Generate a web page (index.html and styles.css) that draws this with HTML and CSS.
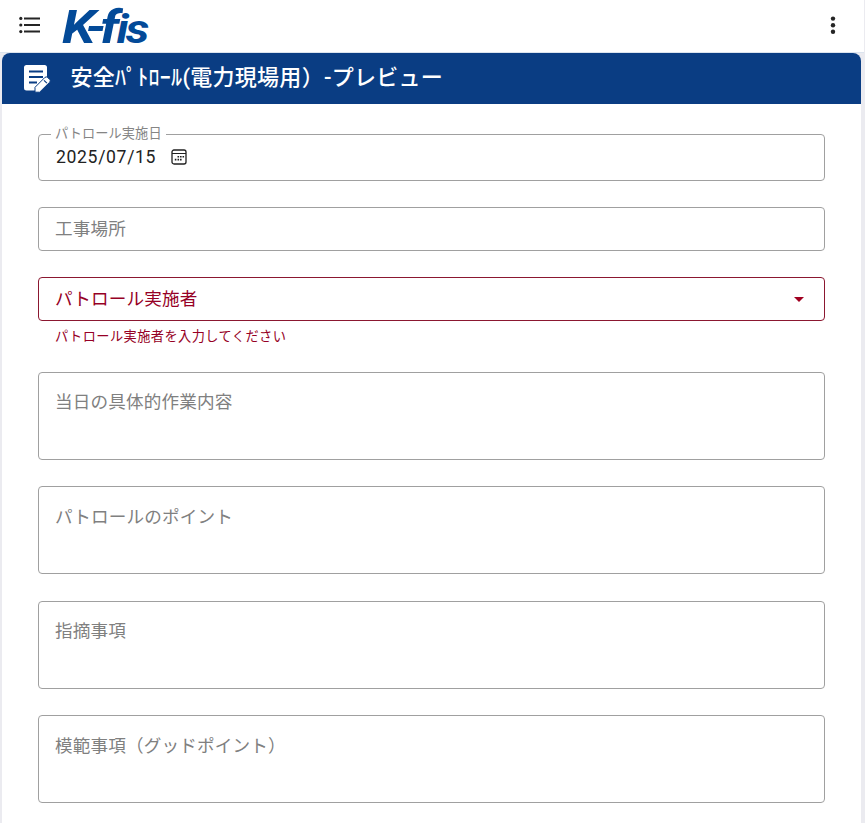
FILE: index.html
```html
<!DOCTYPE html>
<html lang="ja">
<head>
<meta charset="utf-8">
<title>K-fis</title>
<link rel="stylesheet" href="styles.css">
</head>
<body>
<header class="topbar">
  <svg class="menu" viewBox="0 0 22 18"><g fill="#252525"><circle cx="1.8" cy="2.4" r="1.6"/><circle cx="1.8" cy="9" r="1.6"/><circle cx="1.8" cy="15.6" r="1.6"/><path d="M5 1.4h16v2H5zM5 8h16v2H5zM5 14.6h16v2H5z"/></g></svg>
  <svg class="logo" viewBox="0 0 90 42"><text y="39" transform="scale(1.15 1)" x="0 20.5 33.2">K-f<tspan class="small" x="47.5 55.5">is</tspan></text></svg>
  <svg class="more" viewBox="0 0 6 20"><g fill="#252525"><circle cx="3" cy="3.6" r="2.2"/><circle cx="3" cy="10.2" r="2.2"/><circle cx="3" cy="16.8" r="2.2"/></g></svg>
</header>
<main class="sheet">
  <div class="title">
    <svg class="note" viewBox="0 0 28 28"><path fill="#fff" d="M4.5 0h18Q25 0 25 2.500V12L13 25.500H4.500Q2 25.500 2 23V2.500Q2 0 4.500 0z"/><path fill="none" stroke="#0a3d83" stroke-width="2" d="M7 6.500h14M7 12h14M7 17.500h8"/><path fill="#fff" stroke="#0a3d83" stroke-width="1" d="M13 22.300 22.800 12.500q1.500-1.300 2.900 0l2 2q1.300 1.300 0 2.700L17.600 27.200H13z"/><path stroke="#0a3d83" stroke-width="1.200" d="m22 15.300 2.900 2.900"/></svg>
    <h1>安全ﾊﾟﾄﾛｰﾙ(電力現場用）-プレビュー</h1>
  </div>
  <form class="fields">
    <fieldset class="date">
      <legend>パトロール実施日</legend>
      <span class="value">2025/07/15</span>
      <svg class="cal" viewBox="0 0 16 16"><rect x="1" y="1" width="14" height="14" rx="2" fill="none" stroke="#202020" stroke-width="1.300"/><path stroke="#202020" stroke-width="1.200" d="M1 4.500h14"/><path fill="#202020" d="M6.500 7h1.600v1.600H6.500zM9 7h1.600v1.600H9zM11.500 7h1.600v1.600h-1.600zM3.800 9.800h1.600v1.600H3.800zM6.500 9.800h1.600v1.600H6.500zM9 9.800h1.600v1.600H9z"/></svg>
    </fieldset>
    <div class="field line">工事場所</div>
    <div class="field line error"><span>パトロール実施者</span><svg class="caret" viewBox="0 0 10 5"><path fill="#a00020" d="M0 0h10L5 5z"/></svg></div>
    <p class="message">パトロール実施者を入力してください</p>
    <div class="field area">当日の具体的作業内容</div>
    <div class="field area">パトロールのポイント</div>
    <div class="field area">指摘事項</div>
    <div class="field area">模範事項（グッドポイント）</div>
  </form>
</main>
</body>
</html>
```
FILE: styles.css
```css
* { box-sizing: border-box; }
body {
  margin: 0;
  height: 823px;
  overflow: hidden;
  background: #ebebf0;
  font-family: Roboto, "Noto Sans CJK JP", sans-serif;
  color: #222;
}
.topbar {
  height: 53px;
  width: 864px;
  display: flex;
  align-items: flex-start;
  background: #fff;
  border-bottom: 1px solid #dce4ee;
}
.menu { width: 22px; height: 18px; margin: 16px 0 0 19px; }
.logo { width: 90px; height: 42px; margin: 4px 0 0 21px; overflow: visible; }
.logo text {
  font: italic 700 47px Roboto, sans-serif;
  fill: #034a98;
}
.logo .small { font-size: 41px; }
.more { width: 6px; height: 20px; margin: 15px 28px 0 auto; }
.sheet {
  width: 859px;
  height: 770px;
  margin-left: 2px;
  background: #fff;
  border-radius: 8px 8px 0 0;
  overflow: hidden;
}
.title {
  height: 51px;
  display: flex;
  align-items: center;
  padding-left: 20px;
  background: #0a3d83;
}
.note { width: 28px; height: 28px; overflow: visible; }
h1 {
  margin: -2px 0 0 20.5px;
  font-size: 22px;
  line-height: 32px;
  font-weight: 500;
  letter-spacing: .27px;
  color: #fff;
  white-space: nowrap;
}
.fields { padding: 21px 36px 0; }
fieldset {
  margin: 0;
  min-width: 0;
  height: 56px;
  padding: 4px 17px 0;
  border: 1px solid #a0a0a0;
  border-radius: 4px;
  display: flex;
  align-items: flex-start;
}
legend {
  margin-left: -5px;
  padding: 0 4px;
  font-size: 13.2px;
  line-height: 18px;
  letter-spacing: .1px;
  color: #858585;
}
.value { font-size: 17.6px; line-height: 20px; letter-spacing: .65px; }
.cal { width: 16px; height: 16px; margin: 2px 0 0 15px; }
.field {
  border: 1px solid #a0a0a0;
  border-radius: 4px;
  padding: 0 16px;
  font-size: 17.6px;
  letter-spacing: .15px;
  color: #808080;
}
.line { height: 44px; line-height: 42px; margin-top: 26px; }
.error {
  display: flex;
  align-items: center;
  justify-content: space-between;
  color: #960025;
  border-color: #8b1730;
}
.caret { width: 10px; height: 5px; margin-right: 4px; }
.message {
  margin: 6px 0 0 17px;
  height: 18.4px;
  font-size: 13.2px;
  line-height: 19px;
  letter-spacing: .44px;
  color: #960025;
}
.area { height: 88px; padding-top: 15px; line-height: 28px; margin-top: 26.45px; }
.area:nth-of-type(even) { padding-top: 16px; }
```
